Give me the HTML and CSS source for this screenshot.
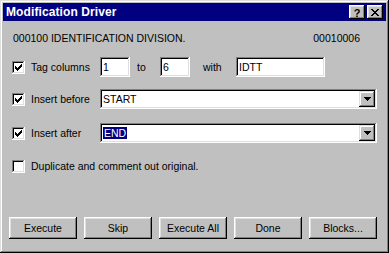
FILE: index.html
```html
<!DOCTYPE html>
<html>
<head>
<meta charset="utf-8">
<link rel="stylesheet" href="styles.css">
</head>
<body>
<div class="window">
  <div class="titlebar">
    <span class="title">Modification Driver</span>
    <div class="title-btns">
      <span class="tbtn q">?</span>
      <span class="tbtn"><svg width="8" height="7" viewBox="0 0 8 7" shape-rendering="crispEdges"><path d="M0 0h2v1h-2z M6 0h2v1h-2z M1 1h2v1h-2z M5 1h2v1h-2z M2 2h4v1h-4z M3 3h2v1h-2z M2 4h4v1h-4z M1 5h2v1h-2z M5 5h2v1h-2z M0 6h2v1h-2z M6 6h2v1h-2z" fill="#000"/></svg></span>
    </div>
  </div>
  <div class="content">
    <div class="row info">
      <span>000100 IDENTIFICATION DIVISION.</span>
      <span>00010006</span>
    </div>
    <div class="row r2">
      <span class="check"><svg width="7" height="7" viewBox="0 0 7 7" shape-rendering="crispEdges"><path d="M6 0h1v1h-1z M5 1h2v1h-2z M0 2h1v1h-1z M4 2h3v1h-3z M0 3h2v1h-2z M3 3h3v1h-3z M0 4h5v1h-5z M1 5h3v1h-3z M2 6h1v1h-1z" fill="#000"/></svg></span>
      <span class="label">Tag columns</span>
      <span class="field small">1</span>
      <span class="mid to">to</span>
      <span class="field small">6</span>
      <span class="mid with">with</span>
      <span class="field wide">IDTT</span>
    </div>
    <div class="row r3">
      <span class="check"><svg width="7" height="7" viewBox="0 0 7 7" shape-rendering="crispEdges"><path d="M6 0h1v1h-1z M5 1h2v1h-2z M0 2h1v1h-1z M4 2h3v1h-3z M0 3h2v1h-2z M3 3h3v1h-3z M0 4h5v1h-5z M1 5h3v1h-3z M2 6h1v1h-1z" fill="#000"/></svg></span>
      <span class="label">Insert before</span>
      <div class="combo">
        <span class="combo-text">START</span>
        <span class="arrow"><svg width="7" height="4" viewBox="0 0 7 4" shape-rendering="crispEdges"><path d="M0 0h7v1h-7z M1 1h5v1h-5z M2 2h3v1h-3z M3 3h1v1h-1z" fill="#000"/></svg></span>
      </div>
    </div>
    <div class="row r4">
      <span class="check"><svg width="7" height="7" viewBox="0 0 7 7" shape-rendering="crispEdges"><path d="M6 0h1v1h-1z M5 1h2v1h-2z M0 2h1v1h-1z M4 2h3v1h-3z M0 3h2v1h-2z M3 3h3v1h-3z M0 4h5v1h-5z M1 5h3v1h-3z M2 6h1v1h-1z" fill="#000"/></svg></span>
      <span class="label">Insert after</span>
      <div class="combo">
        <span class="combo-text"><span class="sel">END</span></span>
        <span class="arrow"><svg width="7" height="4" viewBox="0 0 7 4" shape-rendering="crispEdges"><path d="M0 0h7v1h-7z M1 1h5v1h-5z M2 2h3v1h-3z M3 3h1v1h-1z" fill="#000"/></svg></span>
      </div>
    </div>
    <div class="row r5">
      <span class="check"></span>
      <span>Duplicate and comment out original.</span>
    </div>
    <div class="buttons">
      <span class="btn">Execute</span>
      <span class="btn">Skip</span>
      <span class="btn">Execute All</span>
      <span class="btn">Done</span>
      <span class="btn">Blocks...</span>
    </div>
  </div>
</div>
</body>
</html>
```

FILE: styles.css
```css
* { box-sizing: border-box; }
html, body { margin: 0; padding: 0; background: #c0c0c0; }
body {
  font-family: "Liberation Sans", Arial, sans-serif;
  font-size: 10.5px;
  color: #000;
}
.window {
  width: 389px;
  height: 253px;
  padding: 3px;
  background: #c0c0c0;
  display: flex;
  flex-direction: column;
  box-shadow: inset -1px -1px #000, inset 1px 1px #dfdfdf, inset -2px -2px #808080, inset 2px 2px #fff;
}
.titlebar {
  height: 18px;
  background: #000080;
  display: flex;
  align-items: center;
  justify-content: space-between;
  padding: 0 3px 0 3px;
  flex: none;
}
.title {
  color: #fff;
  font-weight: bold;
  font-size: 12px;
  letter-spacing: 0.1px;
}
.title-btns { display: flex; gap: 2px; }
.tbtn {
  width: 16px;
  height: 14px;
  background: #c0c0c0;
  display: flex;
  align-items: center;
  justify-content: center;
  box-shadow: inset -1px -1px #000, inset 1px 1px #fff, inset -2px -2px #808080, inset 2px 2px #dfdfdf;
}
.tbtn.q { font-weight: bold; font-size: 11px; line-height: 14px; padding-top: 1px; }
.tbtn svg { display: block; margin-top: 0; }

.content {
  flex: 1;
  display: flex;
  flex-direction: column;
  padding: 11px 9px 11px 6px;
}
.row { display: flex; align-items: center; flex: none; }
.info {
  height: 13px;
  line-height: 13px;
  justify-content: space-between;
  padding-left: 4px;
  padding-right: 17px;
}
.r2 { height: 20px; margin-top: 12px; padding-left: 3px; }
.r3 { height: 20px; margin-top: 12px; padding-left: 3px; }
.r4 { height: 20px; margin-top: 14px; padding-left: 3px; }
.r5 { height: 20px; margin-top: 13px; padding-left: 3px; }

.check {
  width: 13px;
  height: 13px;
  background: #fff;
  flex: none;
  margin-right: 6px;
  display: flex;
  align-items: center;
  justify-content: center;
  box-shadow: inset -1px -1px #fff, inset 1px 1px #808080, inset -2px -2px #dfdfdf, inset 2px 2px #000;
}
.check svg { display: block; }
.label { width: 69px; flex: none; }

.field {
  height: 20px;
  background: #fff;
  flex: none;
  padding: 3px 3px 0 3px;
  line-height: 14px;
  box-shadow: inset -1px -1px #fff, inset 1px 1px #808080, inset -2px -2px #dfdfdf, inset 2px 2px #000;
}
.field.small { width: 30px; }
.field.wide { width: 89px; }
.mid { flex: none; }
.to { width: 30px; padding-left: 7px; }
.with { width: 46px; padding-left: 13px; }

.combo {
  flex: 1;
  height: 20px;
  background: #fff;
  display: flex;
  align-items: center;
  justify-content: space-between;
  padding: 2px;
  box-shadow: inset -1px -1px #fff, inset 1px 1px #808080, inset -2px -2px #dfdfdf, inset 2px 2px #000;
}
.combo-text { padding-left: 1px; line-height: 13px; }
.sel { background: #000080; color: #fff; padding: 0 1px; display: inline-block; line-height: 12px; }
.arrow {
  width: 16px;
  height: 16px;
  background: #c0c0c0;
  display: flex;
  align-items: center;
  justify-content: center;
  box-shadow: inset -1px -1px #000, inset 1px 1px #dfdfdf, inset -2px -2px #808080, inset 2px 2px #fff;
}
.arrow svg { display: block; }

.buttons {
  margin-top: auto;
  display: flex;
  gap: 7px;
}
.btn {
  width: 68px;
  height: 22px;
  display: flex;
  align-items: center;
  justify-content: center;
  background: #c0c0c0;
  box-shadow: inset -1px -1px #000, inset 1px 1px #fff, inset -2px -2px #808080, inset 2px 2px #dfdfdf;
}
```
